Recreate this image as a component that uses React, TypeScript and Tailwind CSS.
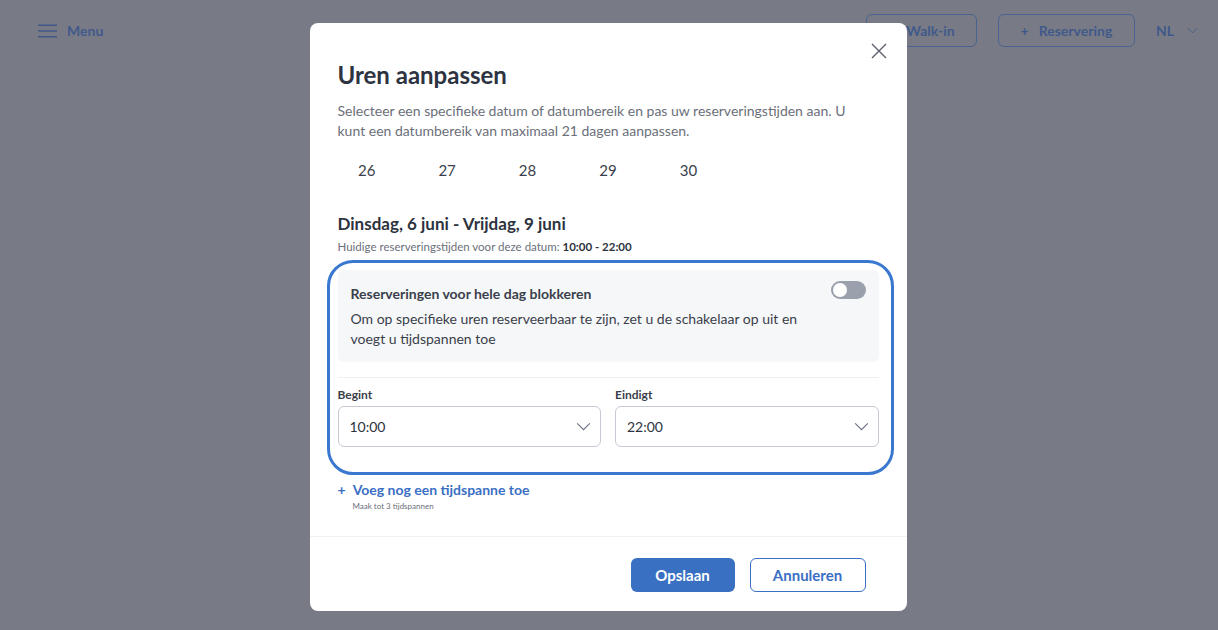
import React from 'react';

const font = { fontFamily: 'Lato, "Noto Sans", sans-serif' };

function Chevron({ className }: { className?: string }) {
  return (
    <svg viewBox="0 0 16 10" className={className} fill="none" stroke="currentColor" strokeWidth="1.3">
      <path d="M1 1.5l7 7 7-7" />
    </svg>
  );
}

function TimeSelect({ label, value }: { label: string; value: string }) {
  return (
    <div className="flex-1">
      <div className="text-[12px] font-bold text-[#3a3f4b] leading-[16px] mb-[3px]">{label}</div>
      <div className="h-[41px] border border-[#c5cad3] rounded-[6px] flex items-center justify-between pl-[11px] pr-[9px]">
        <span className="text-[14px] text-[#2d3340]">{value}</span>
        <Chevron className="w-[15px] h-[9px] text-[#6b7180]" />
      </div>
    </div>
  );
}

export default function App() {
  const days = ['26', '27', '28', '29', '30'];

  return (
    <div className="relative w-[1218px] h-[630px] bg-[#787b86] overflow-hidden" style={font}>
      {/* page header behind the overlay */}
      <div className="flex items-center justify-between h-[61px] pl-[38px] pr-[20px]">
        <div className="flex items-center gap-[10px] text-[#41598a]">
          <svg viewBox="0 0 20 14" className="w-[19px] h-[14px]" fill="none" stroke="currentColor" strokeWidth="1.6">
            <path d="M0 1h20M0 7h20M0 13h20" />
          </svg>
          <span className="text-[14px] font-bold">Menu</span>
        </div>
        <div className="flex items-center">
          <div className="w-[111px] h-[33px] border border-[#4a6290] rounded-[6px] flex items-center justify-center text-[14px] font-bold text-[#41598a] gap-[10px]">
            <span>+</span>
            <span>Walk-in</span>
          </div>
          <div className="ml-[21px] w-[137px] h-[33px] border border-[#4a6290] rounded-[6px] flex items-center justify-center text-[14px] font-bold text-[#41598a] gap-[10px]">
            <span>+</span>
            <span>Reservering</span>
          </div>
          <div className="ml-[21px] flex items-center gap-[13px] text-[14px] font-bold text-[#41598a]">
            <span>NL</span>
            <Chevron className="w-[11px] h-[7px]" />
          </div>
        </div>
      </div>

      {/* modal */}
      <div className="absolute inset-0 flex items-start justify-center pt-[23px] pr-[2px]">
        <div className="relative w-[597px] h-[588px] bg-white rounded-[8px] flex flex-col">
          <button className="absolute right-[20px] top-[20px] w-[16px] h-[16px] text-[#5b606b]">
            <svg viewBox="0 0 16 16" className="w-[16px] h-[16px]" fill="none" stroke="currentColor" strokeWidth="1.4">
              <path d="M1 1l14 14M15 1L1 15" />
            </svg>
          </button>

          <div className="px-[28px] pt-[37px] flex-1">
            <h2 className="text-[24px] font-bold text-[#2d3340] leading-[30px]">Uren aanpassen</h2>
            <p className="mt-[11px] text-[14px] leading-[20px] text-[#6b6f7a] pr-[10px]">
              Selecteer een specifieke datum of datumbereik en pas uw reserveringstijden aan. U kunt een datumbereik van maximaal 21 dagen aanpassen.
            </p>

            <div className="mt-[19px] -ml-[11px] grid grid-cols-7 w-[563px]">
              {days.map((d) => (
                <div key={d} className="text-center text-[15px] text-[#3a3f4b] leading-[20px]">{d}</div>
              ))}
            </div>

            <div className="mt-[33px] text-[17px] font-bold text-[#2d3340] leading-[22px]">
              Dinsdag, 6 juni - Vrijdag, 9 juni
            </div>
            <div className="mt-[4px] text-[11.5px] text-[#6b6f7a] leading-[16px]">
              Huidige reserveringstijden voor deze datum: <span className="font-bold text-[#2d3340]">10:00 - 22:00</span>
            </div>

            <div className="relative mt-[15px]">
              <div className="bg-[#f6f7f9] rounded-[6px] px-[13px] pt-[15px] pb-[13px]">
                <div className="flex items-start justify-between">
                  <div className="text-[14px] font-bold text-[#3a3f4b] leading-[18px]">
                    Reserveringen voor hele dag blokkeren
                  </div>
                  <div className="w-[35px] h-[18px] rounded-full bg-[#9aa0ac] p-[2px] -mt-[4px]">
                    <div className="w-[14px] h-[14px] rounded-full bg-white" />
                  </div>
                </div>
                <p className="mt-[6px] text-[14px] leading-[20px] text-[#3a3f4b] pr-[40px]">
                  Om op specifieke uren reserveerbaar te zijn, zet u de schakelaar op uit en voegt u tijdspannen toe
                </p>
              </div>

              <div className="mt-[15px] border-t border-[#eef0f2] pt-[9px] flex gap-[14px]">
                <TimeSelect label="Begint" value="10:00" />
                <TimeSelect label="Eindigt" value="22:00" />
              </div>

              {/* highlight annotation */}
              <div className="absolute -left-[11px] -right-[15px] -top-[10px] -bottom-[28px] border-[3px] border-[#3a78d0] rounded-[26px] pointer-events-none" />
            </div>

            <div className="mt-[34px] flex items-center gap-[7px] text-[14px] font-bold text-[#3a6fc4] leading-[18px]">
              <span>+</span>
              <span>Voeg nog een tijdspanne toe</span>
            </div>
            <div className="ml-[15px] mt-[1px] text-[8px] text-[#6b6f7a]">Maak tot 3 tijdspannen</div>
          </div>

          <div className="border-t border-[#f0f1f3] h-[75px] flex items-center justify-end gap-[15px] pr-[41px] pt-[2px]">
            <button className="w-[104px] h-[34px] rounded-[6px] bg-[#3a70c2] text-white text-[15px] font-bold">
              Opslaan
            </button>
            <button className="w-[116px] h-[34px] rounded-[6px] border border-[#3a70c2] text-[#3a6fc4] text-[15px] font-bold">
              Annuleren
            </button>
          </div>
        </div>
      </div>
    </div>
  );
}
